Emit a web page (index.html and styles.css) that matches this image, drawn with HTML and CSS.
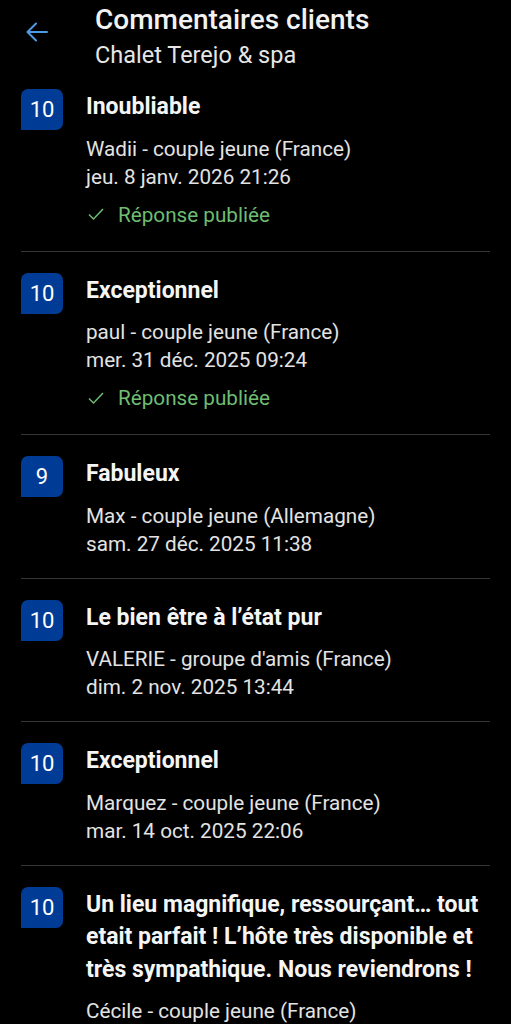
FILE: index.html
```html
<!DOCTYPE html>
<html lang="fr">
<head>
    <meta charset="UTF-8">
    <meta name="viewport" content="width=device-width, initial-scale=1.0">
    <title>Commentaires clients</title>
    <link rel="stylesheet" href="styles.css">
</head>
<body>

    <header class="top-bar">
        <button class="back-btn" aria-label="Retour">
            <svg width="24" height="24" viewBox="0 0 24 24">
                <path d="M22 12H3.5M11 3.5L2.5 12 11 20.5" fill="none" stroke="#4d9be6" stroke-width="2" stroke-linecap="round" stroke-linejoin="round"/>
            </svg>
        </button>
        <div class="titles">
            <h1>Commentaires clients</h1>
            <p>Chalet Terejo &amp; spa</p>
        </div>
    </header>

    <ul class="reviews">
        <li class="review">
            <span class="score">10</span>
            <div class="body">
                <h2>Inoubliable</h2>
                <p class="guest">Wadii - couple jeune (France)</p>
                <p class="date">jeu. 8 janv. 2026 21:26</p>
                <p class="reply">
                    <svg width="16" height="13" viewBox="0 0 16 13"><path d="M1 6.5l4.5 4.5L15 1" fill="none" stroke="#6fbd72" stroke-width="1.5"/></svg>
                    Réponse publiée
                </p>
            </div>
        </li>
        <li class="review">
            <span class="score">10</span>
            <div class="body">
                <h2>Exceptionnel</h2>
                <p class="guest">paul - couple jeune (France)</p>
                <p class="date">mer. 31 déc. 2025 09:24</p>
                <p class="reply">
                    <svg width="16" height="13" viewBox="0 0 16 13"><path d="M1 6.5l4.5 4.5L15 1" fill="none" stroke="#6fbd72" stroke-width="1.5"/></svg>
                    Réponse publiée
                </p>
            </div>
        </li>
        <li class="review">
            <span class="score">9</span>
            <div class="body">
                <h2>Fabuleux</h2>
                <p class="guest">Max - couple jeune (Allemagne)</p>
                <p class="date">sam. 27 déc. 2025 11:38</p>
            </div>
        </li>
        <li class="review">
            <span class="score">10</span>
            <div class="body">
                <h2>Le bien être à l’état pur</h2>
                <p class="guest">VALERIE - groupe d'amis (France)</p>
                <p class="date">dim. 2 nov. 2025 13:44</p>
            </div>
        </li>
        <li class="review">
            <span class="score">10</span>
            <div class="body">
                <h2>Exceptionnel</h2>
                <p class="guest">Marquez - couple jeune (France)</p>
                <p class="date">mar. 14 oct. 2025 22:06</p>
            </div>
        </li>
        <li class="review">
            <span class="score">10</span>
            <div class="body">
                <h2>Un lieu magnifique, ressourçant… tout etait parfait ! L’hôte très disponible et très sympathique. Nous reviendrons !</h2>
                <p class="guest">Cécile - couple jeune (France)</p>
            </div>
        </li>
    </ul>

</body>
</html>
```

FILE: styles.css
```css
body {
    margin: 0;
    background-color: #000;
    color: #e3e3e3;
    font-family: Roboto, "Noto Sans", sans-serif;
    height: 1024px;
    overflow: hidden;
}

.top-bar {
    display: flex;
    align-items: flex-start;
    padding: 2px 21px 0 25px;
}

.back-btn {
    background: none;
    border: none;
    padding: 0;
    margin-top: 18px;
    width: 24px;
    height: 24px;
}

.titles {
    margin-left: 46px;
}

.titles h1 {
    margin: 0;
    font-size: 28px;
    font-weight: 500;
    line-height: 36px;
    color: #f2f2f2;
}

.titles p {
    margin: 0;
    font-size: 23.5px;
    line-height: 34px;
    color: #e6e6e6;
}

.reviews {
    list-style: none;
    margin: 0;
    padding: 0 21px;
}

.review {
    display: flex;
    gap: 23px;
    padding: 21px 0 20px;
    border-bottom: 1px solid #363636;
}

.review:first-child {
    padding-top: 17px;
}

.score {
    flex: none;
    width: 42px;
    height: 41px;
    background-color: #003b95;
    border-radius: 7px 7px 7px 0;
    color: #fff;
    font-size: 22px;
    line-height: 41px;
    text-align: center;
}

.body h2 {
    margin: 2px 0 11px;
    font-size: 23px;
    font-weight: 700;
    line-height: 32.5px;
    color: #f5f5f5;
}

.body p {
    margin: 0;
    font-size: 20.7px;
    line-height: 28px;
}

.reply {
    display: flex;
    align-items: center;
    gap: 14px;
    margin-top: 8px !important;
    padding-left: 2px;
    line-height: 32px !important;
    color: #6fbd72;
}
```
